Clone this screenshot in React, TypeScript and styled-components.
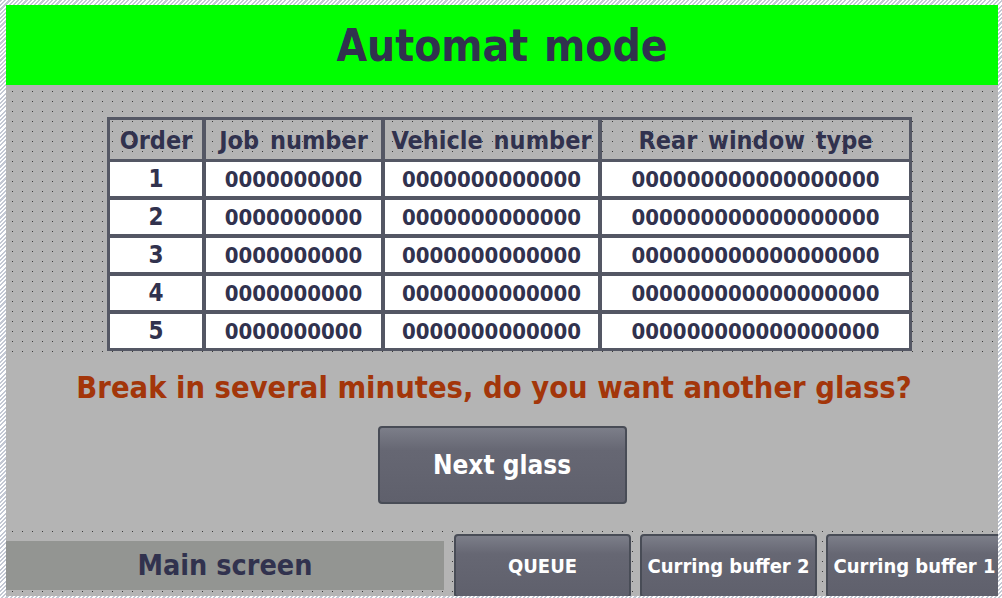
import React from "react";
import styled, { createGlobalStyle } from "styled-components";

const Global = createGlobalStyle`
  html, body { margin: 0; padding: 0; background: #ffffff; }
  body { font-family: "DejaVu Sans Condensed", "DejaVu Sans", sans-serif; }
`;

const FONT = `"DejaVu Sans Condensed", "DejaVu Sans", sans-serif`;
const NAVY = "#31324e";
const CELL_BORDER = "#545764";

const dots = (offX: number, offY: number) => `
  background-color: #b4b4b4;
  background-image: conic-gradient(from 270deg at 1px 1px, #3a3a3a 90deg, transparent 0);
  background-size: 10px 10px;
  background-position: ${offX}px ${offY}px;
`;

const Frame = styled.div`
  width: 1002px;
  height: 598px;
  box-sizing: border-box;
  padding: 5px 4px 2px 6px;
  background: repeating-linear-gradient(
    -45deg,
    #ffffff 0px,
    #ffffff 1.5px,
    #c3c8d3 1.5px,
    #c3c8d3 3px
  );
  overflow: hidden;
`;

const Screen = styled.div`
  width: 992px;
  height: 591px;
  background: #b4b4b4;
  display: flex;
  flex-direction: column;
  overflow: hidden;
  font-family: ${FONT};
  font-stretch: condensed;
  font-weight: bold;
`;

const Header = styled.div`
  height: 80px;
  flex: none;
  background: #00ff00;
  display: flex;
  align-items: center;
  justify-content: center;
`;

const Title = styled.h1`
  margin: 0;
  font-size: 44px;
  font-weight: bold;
  color: ${NAVY};
  word-spacing: 2px;
`;

const TopSection = styled.div`
  height: 270px;
  flex: none;
  ${dots(6, 6)}
  padding: 32px 0 0 101px;
  box-sizing: border-box;
`;

const Table = styled.div`
  display: grid;
  grid-template-columns: 96px 179px 217px 311px;
  grid-template-rows: 42px repeat(5, 38px);
  width: max-content;
  border: 1px solid ${CELL_BORDER};
`;

const HeadCell = styled.div`
  border: 2px solid ${CELL_BORDER};
  border-bottom-width: 1px;
  display: flex;
  align-items: center;
  justify-content: center;
  font-size: 25px;
  word-spacing: 3px;
  color: ${NAVY};
  padding-top: 2px;
  white-space: nowrap;
`;

const Cell = styled.div<{ $big?: boolean }>`
  border: 2px solid ${CELL_BORDER};
  background: #ffffff;
  display: flex;
  align-items: center;
  justify-content: center;
  font-size: ${(p) => (p.$big ? "24px" : "22px")};
  color: ${NAVY};
  white-space: nowrap;
`;

const MiddleSection = styled.div`
  height: 170px;
  flex: none;
  display: flex;
  flex-direction: column;
  align-items: center;
`;

const Message = styled.div`
  margin-top: 15px;
  margin-right: 16px;
  font-size: 30.6px;
  color: #a3360a;
  white-space: nowrap;
`;

const ActionButton = styled.button`
  margin-top: 21px;
  width: 249px;
  height: 78px;
  box-sizing: border-box;
  border: 2px solid #484c56;
  border-radius: 4px;
  background: linear-gradient(to bottom, #7c7e89 0%, #666773 30%, #5f606c 100%);
  color: #ffffff;
  font-family: ${FONT};
  font-stretch: condensed;
  font-weight: bold;
  font-size: 26px;
  padding: 0;
`;

const BottomSection = styled.div`
  flex: 1;
  ${dots(6, 6)}
  display: flex;
  align-items: flex-start;
`;

const MainBox = styled.div`
  margin-top: 16px;
  width: 438px;
  height: 49px;
  background: #939592;
  display: flex;
  align-items: center;
  justify-content: center;
  font-size: 28.5px;
  color: ${NAVY};
  flex: none;
`;

const NavButtons = styled.div`
  margin-top: 9px;
  margin-left: 10px;
  display: flex;
  gap: 9px;
`;

const NavButton = styled.button`
  width: 177px;
  height: 64px;
  flex: none;
  box-sizing: border-box;
  border: 2px solid #484c56;
  border-radius: 4px;
  background: linear-gradient(to bottom, #7c7e89 0%, #666773 30%, #5f606c 100%);
  color: #ffffff;
  font-family: ${FONT};
  font-stretch: condensed;
  font-weight: bold;
  font-size: 20px;
  padding: 0;
  white-space: nowrap;
`;

const rows = [1, 2, 3, 4, 5];

export default function App() {
  return (
    <>
      <Global />
      <Frame>
        <Screen>
          <Header>
            <Title>Automat mode</Title>
          </Header>
          <TopSection>
            <Table>
              <HeadCell>Order</HeadCell>
              <HeadCell>Job number</HeadCell>
              <HeadCell>Vehicle number</HeadCell>
              <HeadCell>Rear window type</HeadCell>
              {rows.map((r) => (
                <React.Fragment key={r}>
                  <Cell $big>{r}</Cell>
                  <Cell>0000000000</Cell>
                  <Cell>0000000000000</Cell>
                  <Cell>000000000000000000</Cell>
                </React.Fragment>
              ))}
            </Table>
          </TopSection>
          <MiddleSection>
            <Message>Break in several minutes, do you want another glass?</Message>
            <ActionButton>Next glass</ActionButton>
          </MiddleSection>
          <BottomSection>
            <MainBox>Main screen</MainBox>
            <NavButtons>
              <NavButton>QUEUE</NavButton>
              <NavButton>Curring buffer 2</NavButton>
              <NavButton>Curring buffer 1</NavButton>
            </NavButtons>
          </BottomSection>
        </Screen>
      </Frame>
    </>
  );
}
